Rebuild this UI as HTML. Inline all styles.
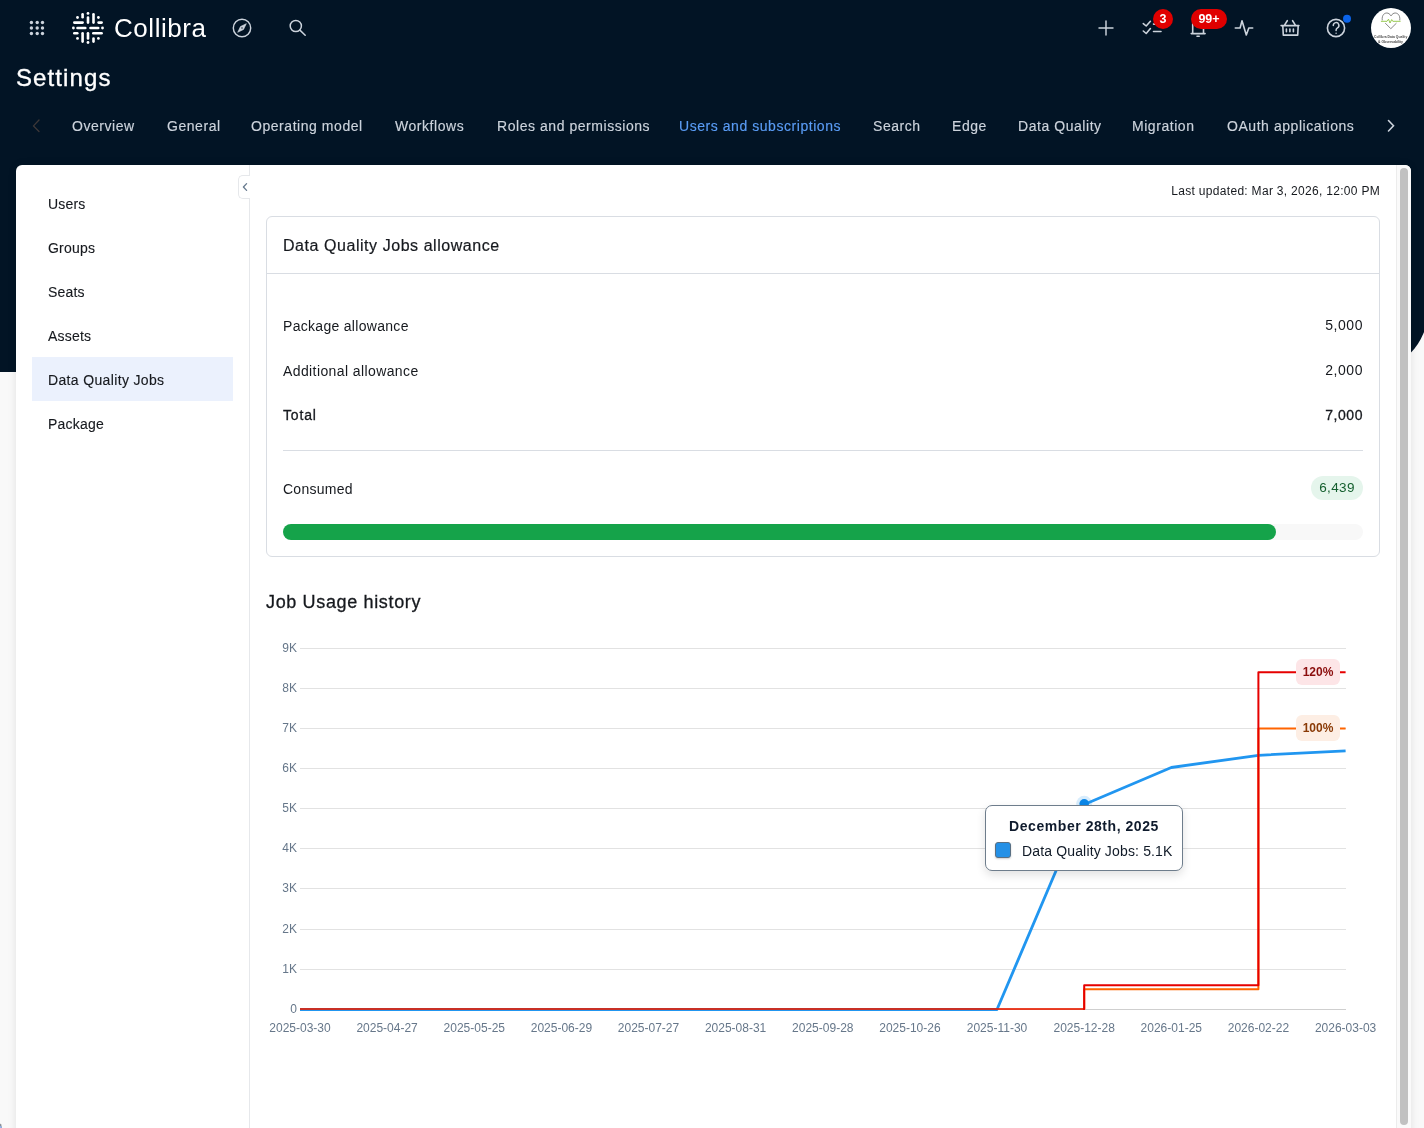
<!DOCTYPE html>
<html><head><meta charset="utf-8">
<style>
*{box-sizing:border-box;margin:0;padding:0}
html,body{width:1424px;height:1128px;overflow:hidden}
body{will-change:transform;background:#f9f9f9;font-family:"Liberation Sans",sans-serif;color:#16191e;position:relative}
.abs{position:absolute}
#hdr{position:absolute;left:0;top:0;width:1428px;height:372px;background:#021425;border-bottom-right-radius:62px}
.ico{position:absolute;display:block}
#title{position:absolute;left:16px;top:62.5px;font-size:24px;line-height:30px;color:#fff;letter-spacing:1.1px;-webkit-text-stroke:0.35px #fff}
.tab{position:absolute;top:117px;font-size:14px;line-height:18px;color:#ccd3dc;letter-spacing:0.55px;white-space:nowrap;-webkit-text-stroke:0.15px #ccd3dc}
.tab.act{color:#5a9cf5;-webkit-text-stroke:0.15px #5a9cf5}
#card{position:absolute;left:16px;top:165px;width:1395px;height:980px;background:#fff;border-radius:6px;box-shadow:0 0 8px rgba(0,0,0,0.1)}
#side{position:absolute;left:0;top:0;width:234px;height:100%;border-right:1px solid #e6e8eb}
.si{-webkit-text-stroke:0.12px #16191e;position:absolute;left:16px;width:201px;height:44px;padding-left:16px;padding-top:1px;font-size:14px;line-height:44px;letter-spacing:0.2px;color:#16191e}
.si.act{background:#ebf1fd}
#collapse{position:absolute;left:222px;top:10px;width:12px;height:24px;background:#fff;border:1px solid #e6e8eb;border-right:none;border-radius:5px 0 0 5px}
#sb{position:absolute;left:1380px;top:0;width:15px;height:100%;background:#fafafa;border-left:1px solid #ececec;border-radius:0 6px 0 0}
#thumb{position:absolute;left:3px;top:3px;width:8px;height:957px;background:#c1c1c1;border-radius:4px}
</style></head>
<body>
<div id="hdr"></div>

<!-- top bar icons -->
<svg class="ico" style="left:26px;top:17px" width="22" height="22" viewBox="0 0 22 22" fill="#ccd3dc">
  <circle cx="5.4" cy="5.5" r="1.7"/><circle cx="11.2" cy="5.5" r="1.7"/><circle cx="16.5" cy="5.5" r="1.7"/>
  <circle cx="5.4" cy="11" r="1.7"/><circle cx="11.2" cy="11" r="1.7"/><circle cx="16.5" cy="11" r="1.7"/>
  <circle cx="5.4" cy="16.5" r="1.7"/><circle cx="11.2" cy="16.5" r="1.7"/><circle cx="16.5" cy="16.5" r="1.7"/>
</svg>

<!-- logo -->
<svg class="ico" style="left:70px;top:10px" width="36" height="36" viewBox="0 0 36 36" stroke="#fff" stroke-width="2.6" stroke-linecap="round" fill="#fff">
  <line x1="12.6" y1="4.3" x2="12.6" y2="7.3"/>
  <line x1="12.6" y1="23.3" x2="12.6" y2="31.6"/>
  <line x1="18" y1="7.5" x2="18" y2="12.6"/>
  <line x1="18" y1="23.3" x2="18" y2="28.4"/>
  <line x1="23.5" y1="4.3" x2="23.5" y2="12.6"/>
  <line x1="23.5" y1="28.6" x2="23.5" y2="31.6"/>
  <line x1="4.3" y1="12.6" x2="12.6" y2="12.6"/>
  <line x1="28.6" y1="12.6" x2="31.6" y2="12.6"/>
  <line x1="7.5" y1="18" x2="15.3" y2="18"/>
  <line x1="20.5" y1="18" x2="28.2" y2="18"/>
  <line x1="4.3" y1="23.3" x2="7.3" y2="23.3"/>
  <line x1="23.3" y1="23.3" x2="31.6" y2="23.3"/>
  <g stroke="none">
  <circle cx="18" cy="3.4" r="1.4"/><circle cx="18" cy="32.5" r="1.4"/>
  <circle cx="3.4" cy="18" r="1.4"/><circle cx="32.5" cy="18" r="1.4"/>
  <circle cx="7.5" cy="7.5" r="1.4"/><circle cx="28.4" cy="7.5" r="1.4"/>
  <circle cx="7.5" cy="28.4" r="1.4"/><circle cx="28.4" cy="28.4" r="1.4"/>
  </g>
</svg>
<div class="abs" style="left:114px;top:12.5px;font-size:26px;line-height:30px;color:#fff;letter-spacing:0.55px">Collibra</div>

<!-- compass -->
<svg class="ico" style="left:230px;top:16px" width="24" height="24" viewBox="0 0 24 24" fill="none" stroke="#ccd3dc" stroke-width="1.45">
  <circle cx="12" cy="12" r="8.7"/>
  <path d="M16.3 7.7 L13.5 13.5 L7.7 16.3 L10.5 10.5 Z" fill="#ccd3dc" stroke-width="0.6" stroke-linejoin="round"/>
  <circle cx="12" cy="12" r="0.9" fill="#5a6472" stroke="none"/>
</svg>
<!-- search -->
<svg class="ico" style="left:284px;top:14px" width="26" height="26" viewBox="0 0 26 26" fill="none" stroke="#ccd3dc" stroke-width="1.5" stroke-linecap="round">
  <circle cx="11.8" cy="12" r="5.6"/>
  <line x1="15.9" y1="16.1" x2="21.2" y2="21.3"/>
</svg>

<!-- right icons -->
<svg class="ico" style="left:1080px;top:0" width="344" height="56" viewBox="1080 0 344 56" fill="none" stroke="#ccd3dc" stroke-width="1.6" stroke-linecap="round" stroke-linejoin="round">
  <path d="M1106 21 V35 M1099 28 H1113" stroke-width="1.45"/>
  <path d="M1143.3 23.6 L1146.2 26 L1150.4 21.3 M1143.3 31 L1146.2 33.5 L1150.4 28.6 M1153.5 24.1 H1161 M1153.5 31.5 H1161"/>
  <path d="M1192.7 33.5 V25 a5.4 5.4 0 0 1 10.8 0 V33.5 M1191.2 33.6 H1205.1 M1197 36.2 H1199.2"/>
  <path d="M1235.3 28 H1240.1 L1242 20.7 L1246.3 35 L1248.8 28 H1252.7"/>
  <path d="M1281.1 25.6 H1298.9 M1282.8 25.6 L1283.3 35.1 H1297.7 L1298.2 25.6 M1284.2 25.6 L1287.3 20.7 M1295.7 25.6 L1292.6 20.7 M1286.4 29 V31.8 M1289.9 29 V31.8 M1293.4 29 V31.8"/>
  <circle cx="1336" cy="28" r="8.6"/>
  <path d="M1333.3 25.4 a2.8 2.8 0 1 1 4.2 2.4 c-0.9 0.5 -1.4 1 -1.4 2.1 V30.6" stroke-width="1.5"/>
  <circle cx="1336.1" cy="33.2" r="0.7" fill="#ccd3dc" stroke="none"/>
  <circle cx="1347" cy="18.8" r="4" fill="#0b63e8" stroke="none"/>
  <circle cx="1163" cy="19" r="10" fill="#e00000" stroke="none"/>
  <rect x="1191" y="9" width="36" height="20" rx="10" fill="#e00000" stroke="none"/>
  <g font-family="Liberation Sans" font-weight="700" fill="#fff" stroke="none" text-anchor="middle">
    <text x="1163" y="23.4" font-size="12.5">3</text>
    <text x="1209" y="23.4" font-size="12.5">99+</text>
  </g>
  <!-- avatar -->
  <circle cx="1391" cy="28" r="20" fill="#fff" stroke="none"/>
  <path d="M1382.2 20 C1381.6 14.6 1385 12.3 1388 13.2 C1389.5 13.7 1390.5 15 1391 16 C1391.5 15 1392.5 13.7 1394 13.2 C1397 12.3 1400.4 14.6 1399.8 20" stroke="#6a6a6a" stroke-width="0.8"/>
  <path d="M1385.5 23.4 L1390.8 28.7 L1396.2 23.4" stroke="#6a6a6a" stroke-width="0.8"/>
  <path d="M1381.3 21.3 H1387 L1388.5 19.2 L1390 23 L1391.7 19.6 L1392.8 21.3 H1400.2" stroke="#8cc43c" stroke-width="0.9"/>
  <g font-family="Liberation Sans" font-size="3.6" font-weight="700" fill="#4a4a4a" stroke="none">
    <text x="1374" y="38.4" textLength="33.3" lengthAdjust="spacingAndGlyphs">Collibra Data Quality</text>
    <text x="1378" y="42.6" textLength="25" lengthAdjust="spacingAndGlyphs">&amp; Observability</text>
  </g>
</svg>

<div id="title">Settings</div>

<!-- tabs -->
<svg class="ico" style="left:30px;top:117px" width="12" height="18" viewBox="0 0 12 18" fill="none" stroke="#3e3838" stroke-width="1.3" stroke-linecap="round">
  <path d="M9 3 L3.5 8.9 L9 14.5"/>
</svg>
<div class="tab" style="left:72px">Overview</div>
<div class="tab" style="left:167px">General</div>
<div class="tab" style="left:251px">Operating model</div>
<div class="tab" style="left:395px">Workflows</div>
<div class="tab" style="left:497px">Roles and permissions</div>
<div class="tab act" style="left:679px">Users and subscriptions</div>
<div class="tab" style="left:873px">Search</div>
<div class="tab" style="left:952px">Edge</div>
<div class="tab" style="left:1018px">Data Quality</div>
<div class="tab" style="left:1132px">Migration</div>
<div class="tab" style="left:1227px">OAuth applications</div>
<svg class="ico" style="left:1384px;top:117px" width="14" height="18" viewBox="0 0 14 18" fill="none" stroke="#ccd3dc" stroke-width="1.6" stroke-linecap="round">
  <path d="M4.5 3.5 L9.5 8.8 L4.5 14"/>
</svg>

<div id="card">
  <div id="side">
    <div class="si" style="top:16px">Users</div>
    <div class="si" style="top:60px">Groups</div>
    <div class="si" style="top:104px">Seats</div>
    <div class="si" style="top:148px">Assets</div>
    <div class="si act" style="top:192px;letter-spacing:0.35px">Data Quality Jobs</div>
    <div class="si" style="top:236px">Package</div>
    <div id="collapse"></div>
  </div>
  <div id="sb"><div id="thumb"></div></div>
</div>
<!-- collapse chevron -->
<svg class="ico" style="left:240px;top:180px" width="10" height="14" viewBox="0 0 10 14" fill="none" stroke="#677a8e" stroke-width="1.3" stroke-linecap="round" stroke-linejoin="round">
  <path d="M6.6 3.6 L3.4 7 L6.6 10.4"/>
</svg>

<!-- CONTENT -->
<div class="abs" style="left:1000px;width:380px;top:183px;font-size:12px;line-height:16px;text-align:right;letter-spacing:0.3px;color:#16191e">Last updated: Mar 3, 2026, 12:00 PM</div>

<div id="alw" class="abs" style="left:266px;top:216px;width:1114px;height:341px;border:1px solid #d9dde3;border-radius:6px;background:#fff"></div>
<div class="abs" style="left:267px;top:273px;width:1112px;height:1px;background:#d9dde3"></div>
<div class="abs" style="left:283px;top:236px;font-size:16px;line-height:20px;letter-spacing:0.55px;color:#16191e;-webkit-text-stroke:0.2px #16191e">Data Quality Jobs allowance</div>

<div class="abs" style="left:283px;top:315.5px;font-size:14px;line-height:20px;letter-spacing:0.3px">Package allowance</div>
<div class="abs" style="left:1163px;width:200px;top:315px;font-size:14px;line-height:20px;letter-spacing:0.55px;text-align:right">5,000</div>

<div class="abs" style="left:283px;top:360.5px;font-size:14px;line-height:20px;letter-spacing:0.4px">Additional allowance</div>
<div class="abs" style="left:1163px;width:200px;top:359.5px;font-size:14px;line-height:20px;letter-spacing:0.55px;text-align:right">2,000</div>

<div class="abs" style="left:283px;top:405px;font-size:14px;line-height:20px;-webkit-text-stroke:0.3px #16191e;letter-spacing:0.85px">Total</div>
<div class="abs" style="left:1163px;width:200px;top:404.5px;font-size:14px;line-height:20px;-webkit-text-stroke:0.3px #16191e;letter-spacing:0.55px;text-align:right">7,000</div>

<div class="abs" style="left:283px;top:450px;width:1080px;height:1px;background:#d9dde3"></div>

<div class="abs" style="left:283px;top:479px;font-size:14px;line-height:20px;letter-spacing:0.25px">Consumed</div>
<div class="abs" style="left:1311px;top:476px;width:52px;height:24px;border-radius:12px;background:#e5f5ec;color:#145f2e;font-size:13.5px;line-height:24px;text-align:center;letter-spacing:0.35px">6,439</div>

<div class="abs" style="left:283px;top:524px;width:1080px;height:16px;border-radius:8px;background:#f8f8f8"></div>
<div class="abs" style="left:283px;top:524px;width:993px;height:16px;border-radius:8px;background:#15a34a"></div>

<div class="abs" style="left:266px;top:590px;font-size:18px;line-height:24px;letter-spacing:0.65px;color:#16191e;-webkit-text-stroke:0.3px #16191e">Job Usage history</div>

<!-- CHART -->
<svg class="abs" style="left:0;top:0" width="1424" height="1128" viewBox="0 0 1424 1128">
<g stroke="#e2e2e2" stroke-width="1"><line x1="300" y1="969.5" x2="1346" y2="969.5"/><line x1="300" y1="929.5" x2="1346" y2="929.5"/><line x1="300" y1="888.5" x2="1346" y2="888.5"/><line x1="300" y1="848.5" x2="1346" y2="848.5"/><line x1="300" y1="808.5" x2="1346" y2="808.5"/><line x1="300" y1="768.5" x2="1346" y2="768.5"/><line x1="300" y1="728.5" x2="1346" y2="728.5"/><line x1="300" y1="688.5" x2="1346" y2="688.5"/><line x1="300" y1="648.5" x2="1346" y2="648.5"/></g><line x1="300" y1="1009.5" x2="1346" y2="1009.5" stroke="#cfcfcf" stroke-width="1"/>
<g font-family="Liberation Sans" font-size="12" fill="#66778a" text-anchor="end"><text x="297" y="1013">0</text><text x="297" y="973">1K</text><text x="297" y="933">2K</text><text x="297" y="892">3K</text><text x="297" y="852">4K</text><text x="297" y="812">5K</text><text x="297" y="772">6K</text><text x="297" y="732">7K</text><text x="297" y="692">8K</text><text x="297" y="652">9K</text></g>
<g font-family="Liberation Sans" font-size="12" fill="#66778a" text-anchor="middle"><text x="300.0" y="1032">2025-03-30</text><text x="387.1" y="1032">2025-04-27</text><text x="474.3" y="1032">2025-05-25</text><text x="561.4" y="1032">2025-06-29</text><text x="648.5" y="1032">2025-07-27</text><text x="735.6" y="1032">2025-08-31</text><text x="822.8" y="1032">2025-09-28</text><text x="909.9" y="1032">2025-10-26</text><text x="997.0" y="1032">2025-11-30</text><text x="1084.2" y="1032">2025-12-28</text><text x="1171.3" y="1032">2026-01-25</text><text x="1258.4" y="1032">2026-02-22</text><text x="1345.6" y="1032">2026-03-03</text></g>
<path d="M300 1009.5 L997.0 1009.5 L1084.2 804.5 L1171.3 767.5 L1258.4 755.3 L1345.6 750.8" fill="none" stroke="#2196f0" stroke-width="2.8" stroke-linejoin="round"/>
<path d="M300 1009 H1084.2" fill="none" stroke="#ff6400" stroke-width="2" stroke-opacity="0.6"/>
<path d="M1083.2 1009 H1084.2 V989.2 H1258.4 V728.5 H1345.6" fill="none" stroke="#ff6400" stroke-width="2" stroke-linejoin="round"/>
<path d="M300 1009 H1084.2" fill="none" stroke="#e00000" stroke-width="2" stroke-opacity="0.6"/>
<path d="M1083.2 1009 H1084.2 V985.2 H1258.4 V672.3 H1345.6" fill="none" stroke="#e60000" stroke-width="2" stroke-linejoin="round"/>
<rect x="1296" y="659" width="44" height="26" rx="6" fill="#fde5e7"/>
<text x="1318" y="676.3" font-family="Liberation Sans" font-size="12" font-weight="700" fill="#8b0d0d" text-anchor="middle">120%</text>
<rect x="1296" y="715" width="44" height="26" rx="6" fill="#fdeee4"/>
<text x="1318" y="732.3" font-family="Liberation Sans" font-size="12" font-weight="700" fill="#8a3a06" text-anchor="middle">100%</text>
<circle cx="1084.2" cy="803.8" r="8" fill="#2196f0" fill-opacity="0.18"/>
<circle cx="1084.2" cy="803.8" r="4.8" fill="#0b87e8"/>
</svg>
<div class="abs" style="left:985px;top:805px;width:198px;height:66px;background:#fff;border:1px solid #6e7d8c;border-radius:7px;box-shadow:0 4px 10px rgba(0,0,0,0.12)"></div>
<div class="abs" style="left:985px;top:816px;width:198px;text-align:center;font-size:14px;line-height:20px;font-weight:700;color:#0f1b2d;letter-spacing:0.55px">December 28th, 2025</div>
<div class="abs" style="left:995px;top:842px;width:16px;height:16px;background:#2490e6;border:1px solid #5a6f82;border-radius:3px;box-shadow:0 1px 2px rgba(0,0,0,0.2)"></div>
<div class="abs" style="left:1022px;top:841px;font-size:14px;line-height:20px;color:#101a27;letter-spacing:0.15px">Data Quality Jobs: 5.1K</div>

<svg class="abs" style="left:0;top:1122px" width="4" height="6" viewBox="0 0 4 6"><path d="M0 1.5 L1.2 2.5 L2 6 H0 Z" fill="#8a8f96"/><path d="M0 4 L1.4 4.6 L1.8 6 H0 Z" fill="#8fb4f0"/></svg>
</body></html>
